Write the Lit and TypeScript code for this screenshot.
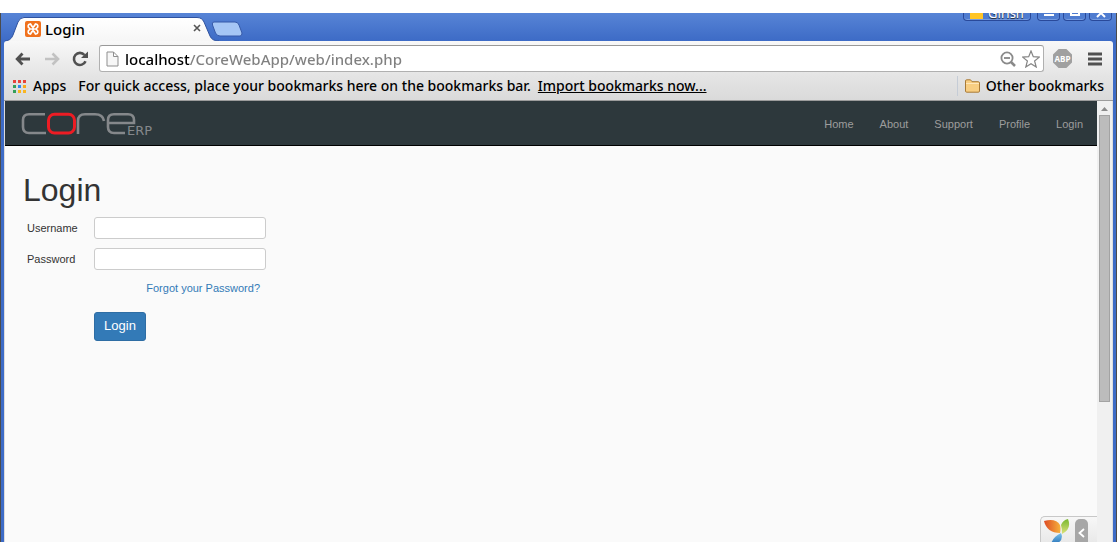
import { LitElement, html, css } from "lit";
import { customElement } from "lit/decorators.js";

@customElement("browser-tabs")
class BrowserTabs extends LitElement {
  static styles = css`
    :host { display: block; height: 28px; overflow: hidden; background: linear-gradient(#5784d6, #3d6bc6); font: 500 15px "Noto Sans", sans-serif; }
    .strip { display: flex; height: 28px; align-items: flex-start; padding: 0 4px; }
    .tab { display: grid; width: 214px; height: 24px; margin-top: 4px; }
    .tab > * { grid-area: 1 / 1; }
    .label { display: flex; align-items: center; padding: 0 16px 0 20px; gap: 4px; color: #000; line-height: 24px; }
    .name { flex: 1; }
    .close { border: 0; background: none; padding: 0; width: 10px; height: 10px; display: flex; }
    .fresh { border: 0; background: none; padding: 0; margin: 8px 0 0 -9px; height: 16px; width: 34px; }
    .gap { flex: 1; }
    .win { display: flex; gap: 3px; height: 8px; overflow: hidden; align-items: flex-end; }
    .win button { border: 1px solid #29499a; border-top: 0; border-radius: 0 0 4px 4px; height: 20px; padding: 0; background: #4f7cd0; width: 23px; box-shadow: inset 0 -1px #759be0; display: flex; align-items: flex-end; justify-content: center; }
    .win .user { width: 68px; margin-right: 3px; color: #fff; font: 13px/12px "Noto Sans", sans-serif; gap: 5px; text-shadow: 0 1px 1px #222; padding-bottom: 1px; }
    .pic { width: 13px; height: 8px; background: #ffc526; }
    .win svg { margin-bottom: 2px; }
  `;
  render() {
    return html`<div class="strip">
      <div class="tab">
        <svg width="214" height="24" viewBox="0 0 214 24">
          <defs><linearGradient id="t" x2="0" y2="1"><stop stop-color="#fff" /><stop offset="1" stop-color="#f6f6f6" /></linearGradient></defs>
          <path d="M-1 24Q6 24 8 18L13 5Q15 .5 19 .5H192Q197 .5 199 5L205 19Q207 24 214 24" fill="url(#t)" stroke="#2f529f" />
        </svg>
        <div class="label">
          <svg width="16" height="16" viewBox="0 0 16 16"><rect width="16" height="16" rx="2" fill="#f0711d" />
            <path d="M5.500 3H5A2.200 2.200 0 0 0 4.500 7.200M5.500 13H5A2.200 2.200 0 0 1 4.500 8.800M10.500 3h.5A2.200 2.200 0 0 1 11.500 7.200M10.500 13h.5A2.200 2.200 0 0 0 11.500 8.800M5.500 3 7 5.500H9L10.500 3M5.500 13 7 10.500H9L10.500 13M4.500 8H6.500M9.500 8h2M8 5.500v5" fill="none" stroke="#fff" stroke-width="1.700" stroke-linecap="round" /></svg>
          <span class="name">Login</span>
          <button class="close" aria-label="Close tab"><svg width="8" height="8" viewBox="0 0 8 8"><path d="M1 1l6 6M7 1 1 7" stroke="#555" stroke-width="1.600" /></svg></button>
        </div>
      </div>
      <button class="fresh" aria-label="New tab"><svg width="34" height="16" viewBox="0 0 34 16"><path d="M4 1H25Q28 1 29 4L32 12Q32 15 30 15H10Q7 15 5.500 12L2.500 4Q1.500 1 4 1Z" fill="#a5c6f5" stroke="#3559a8" /></svg></button>
      <span class="gap"></span>
      <div class="win">
        <button class="user"><span class="pic"></span>Girish</button>
        <button aria-label="Minimize"><svg width="10" height="4"><path d="M0 1h10" stroke="#fff" stroke-width="2" /></svg></button>
        <button aria-label="Maximize"><svg width="10" height="5"><path d="M1 0v2h8V0" fill="none" stroke="#fff" stroke-width="2" /></svg></button>
        <button aria-label="Close"><svg width="10" height="6"><path d="M1 5 5 1l4 4" fill="none" stroke="#fff" stroke-width="2" /></svg></button>
      </div>
    </div>`;
  }
}

@customElement("browser-toolbar")
class BrowserToolbar extends LitElement {
  static styles = css`
    :host { display: block; background: linear-gradient(#f8f8f8, #e4e4e4 60%, #dadada); border-bottom: 1px solid #9c9c9c; font: 500 14px "Noto Sans", sans-serif; color: #000; }
    .row { display: flex; align-items: center; }
    .main { height: 35px; padding: 0 11px 0 8px; }
    .nav { border: 0; background: none; padding: 0; width: 29px; height: 20px; display: flex; align-items: center; }
    .omni { flex: 1; display: flex; align-items: center; height: 27px; box-sizing: border-box; border: 1px solid #b0b0b0; border-top-color: #999; border-radius: 3px; background: #fff; padding: 0 3px 0 6px; gap: 6px; }
    .url { flex: 1; min-width: 0; border: 0; outline: 0; padding: 0; font: 500 15px/24px "Noto Sans", sans-serif; color: #808080; -webkit-text-fill-color: transparent; background: linear-gradient(90deg, #000 65px, #808080 65px); -webkit-background-clip: text; background-clip: text; }
    .act { border: 0; background: none; padding: 0; display: flex; }
    .abp { margin: 0 16px 0 9px; }
    .marks { height: 24px; padding: 0 9px 4px; line-height: 20px; box-sizing: border-box; }
    a { color: inherit; text-decoration: none; }
    .apps { display: flex; align-items: center; gap: 7px; margin-right: 12px; }
    .import { text-decoration: underline; margin-left: 7px; }
    .other { margin-left: auto; display: flex; align-items: center; gap: 6px; border-left: 1px solid #c5ccd6; padding-left: 7px; }
  `;
  render() {
    const tiles = ["#e8433a", "#e8433a", "#e8433a", "#35a05a", "#3189ee", "#f9ab1b", "#35a05a", "#f9b520", "#f9b520"];
    return html`<div class="row main">
        <button class="nav" aria-label="Back"><svg width="24" height="14" viewBox="0 0 24 14"><path d="M5 7H18M10.500 1.500 5.200 7l5.300 5.500" fill="none" stroke="#505050" stroke-width="2.800" /></svg></button>
        <button class="nav" aria-label="Forward"><svg width="24" height="14" viewBox="0 0 24 14"><path d="M4 7H17M11.500 1.500 17 7l-5.500 5.500" fill="none" stroke="#c2c2c2" stroke-width="2.600" /></svg></button>
        <button class="nav" aria-label="Reload"><svg width="22" height="16" viewBox="0 0 22 16"><path d="M15.500 10.200A6 6 0 1 1 14.500 4" fill="none" stroke="#505050" stroke-width="2.600" /><path d="M18 .5V7H11Z" fill="#505050" /></svg></button>
        <div class="omni">
          <svg width="13" height="16" viewBox="0 0 13 16"><path d="M1 1H7.500L12 5.500V15H1ZM7.500 1V5.500H12" fill="#f7f7f7" stroke="#8f8f8f" /></svg>
          <input class="url" aria-label="Address" value="localhost/CoreWebApp/web/index.php" />
          <button class="act" aria-label="Zoom"><svg width="16" height="16" viewBox="0 0 16 16"><circle cx="7" cy="7" r="5.600" fill="none" stroke="#8a8a8a" stroke-width="1.800" /><path d="M4 7h6" stroke="#777" stroke-width="1.600" /><path d="m11 11 4 4" stroke="#8a8a8a" stroke-width="2.500" /></svg></button>
          <button class="act" aria-label="Bookmark this page"><svg width="18" height="18" viewBox="0 0 18 18"><path d="M9 1l2.300 5.700 6 .4-4.700 3.900 1.600 6L9 13.700 3.800 17l1.600-6L.7 7.100l6-.4Z" fill="#fff" stroke="#858585" stroke-width="1.200" /></svg></button>
        </div>
        <button class="act abp" aria-label="Adblock Plus"><svg width="19" height="19" viewBox="0 0 19 19"><path d="M5.600 0h7.800L19 5.600v7.800L13.400 19H5.600L0 13.400V5.600Z" fill="#a0a0a0" /><text x="9.500" y="12.500" text-anchor="middle" font-family="Open Sans, sans-serif" font-size="8" font-weight="700" fill="#fff">ABP</text></svg></button>
        <button class="act" aria-label="Menu"><svg width="14" height="14" viewBox="0 0 14 14"><path d="M0 2h14M0 7h14M0 12h14" stroke="#505050" stroke-width="3" /></svg></button>
      </div>
      <div class="row marks">
        <a class="apps" href="#"><svg width="13" height="13" viewBox="0 0 13 13">${tiles.map((c, i) => html`<svg x=${(i % 3) * 5} y=${Math.floor(i / 3) * 5} width="3" height="3"><rect width="3" height="3" fill=${c} /></svg>`)}</svg>Apps</a>
        <span>For quick access, place your bookmarks here on the bookmarks bar.</span>
        <a class="import" href="#">Import bookmarks now...</a>
        <a class="other" href="#"><svg width="15" height="14" viewBox="0 0 15 14"><path d="M.5 12V2Q.5.8 1.700.8H5.500L7 2.700H13.300Q14.500 2.700 14.500 4V12Q14.500 13.200 13.300 13.200H1.700Q.5 13.200.5 12Z" fill="#f8ce82" stroke="#a87a37" /><path d="M1 4.500h13" stroke="#ffe7b9" /></svg>Other bookmarks</a>
      </div>`;
  }
}

@customElement("login-page")
class LoginPage extends LitElement {
  static styles = css`
    :host { display: block; background: #fafafa; color: #333; font: 11px/16px "Liberation Sans", Arial, sans-serif; overflow: hidden; }
    header { background: #2d383c; border-bottom: 1px solid #000; height: 44px; display: flex; align-items: center; justify-content: space-between; padding: 0 14px 0 16px; }
    .brand { display: flex; }
    nav { display: flex; gap: 26px; padding-top: 2px; }
    nav a { color: #9d9d9d; text-decoration: none; }
    main { padding: 26px 18px; }
    h1 { margin: 0 0 9px; font-size: 32px; line-height: 36px; font-weight: 400; }
    form { display: grid; grid-template-columns: 67px 172px; row-gap: 9px; padding-left: 4px; align-items: center; }
    input { box-sizing: border-box; width: 172px; height: 22px; border: 1px solid #ccc; border-radius: 3px; background: #fff; padding: 2px 6px; font: inherit; color: #555; }
    label { color: #333; }
    .forgot { grid-column: 2; justify-self: end; margin-right: 6px; color: #337ab7; text-decoration: none; padding: 1px 0; }
    .go { grid-column: 2; justify-self: start; margin-top: 6px; height: 29px; width: 52px; border: 1px solid #2e6da4; border-radius: 3px; background: #337ab7; color: #fff; padding: 0 0 2px; font: 13px/18px "Liberation Sans", Arial, sans-serif; }
  `;
  render() {
    return html`<header>
        <a class="brand" href="#" aria-label="Core ERP"><svg width="136" height="34" viewBox="0 -4 136 34">
          <g fill="none" stroke="#85888b" stroke-width="2.600">
            <path d="M24 4.300H8Q2 4.300 2 10V17Q2 23 8 23H25" />
            <path d="M57 24V11Q57 4.300 64 4.300H74Q82 4.300 83 11" />
            <path d="M88 13H113V10Q113 4.300 107 4.300H93Q87 4.300 87 10V17Q87 23 93 23H104" />
          </g>
          <rect x="27.500" y="4.300" width="26" height="18.700" rx="6" fill="none" stroke="#ed1c24" stroke-width="3" />
          <text x="106" y="24.500" font-family="DejaVu Sans, sans-serif" font-size="13" fill="#85888b">ERP</text>
        </svg></a>
        <nav><a href="#">Home</a><a href="#">About</a><a href="#">Support</a><a href="#">Profile</a><a href="#">Login</a></nav>
      </header>
      <main>
        <h1>Login</h1>
        <form>
          <label for="user">Username</label><input id="user" type="text" />
          <label for="pass">Password</label><input id="pass" type="password" />
          <a class="forgot" href="#">Forgot your Password?</a>
          <button class="go" type="button">Login</button>
        </form>
      </main>`;
  }
}

@customElement("app-root")
class AppRoot extends LitElement {
  static styles = css`
    :host { display: block; box-sizing: border-box; height: 100vh; padding: 13px 0; background: #fff; }
    .window { box-sizing: border-box; height: 100%; display: flex; flex-direction: column; overflow: hidden; border: solid #4b4b4b; border-width: 0 1px; background: #3d6bc6; }
    browser-toolbar { margin: 0 3px; border-radius: 3px 3px 0 0; }
    .view { flex: 1; min-height: 0; display: flex; margin: 0 3px; border: solid #dcdcdc; border-width: 0 1px; position: relative; }
    login-page { flex: 1; }
    .bar { width: 15px; box-sizing: border-box; background: #f0f0f0; display: flex; flex-direction: column; align-items: center; }
    .bar svg { flex: none; }
    .thumb { width: 11px; height: 65%; box-sizing: border-box; background: #bcbcbc; border: 1px solid #a3a3a3; }
    .debug { position: absolute; right: 15px; bottom: 0; height: 26px; width: 57px; box-sizing: border-box; border: 1px solid #c8c8c8; border-width: 1px 0 0 1px; border-radius: 5px 0 0; background: linear-gradient(#f7f7f7, #e9e9e9); overflow: hidden; display: flex; align-items: flex-start; padding: 2px 9px 0 2px; justify-content: space-between; }
    .debug button { border: 0; padding: 0; width: 13px; height: 28px; border-radius: 5px; background: #a7a7a7; display: flex; align-items: center; justify-content: center; }
  `;
  render() {
    return html`<div class="window">
      <browser-tabs></browser-tabs>
      <browser-toolbar></browser-toolbar>
      <div class="view">
        <login-page></login-page>
        <div class="bar"><svg width="15" height="14"><path d="M4 10h7L7.500 6Z" fill="#8b8b8b" /></svg><div class="thumb"></div></div>
        <div class="debug">
          <svg width="28" height="30" viewBox="0 0 28 30">
            <defs>
              <linearGradient id="r"><stop stop-color="#dd4a24" /><stop offset="1" stop-color="#f6b13c" /></linearGradient>
              <linearGradient id="g" x2="0" y2="1"><stop stop-color="#79b72f" /><stop offset="1" stop-color="#dbe27b" /></linearGradient>
              <linearGradient id="b" x2="0" y2="1"><stop stop-color="#79c3ec" /><stop offset="1" stop-color="#1d66b0" /></linearGradient>
            </defs>
            <path d="M1 2Q13-1 17 6Q18 9 17 14Q4 14 1 2Z" fill="url(#r)" />
            <path d="M18 6Q20 1 25 0Q29 10 19 15Q19 9 18 6Z" fill="url(#g)" />
            <path d="M18 14Q22 23 8 27Q8 19 18 14Z" fill="url(#b)" />
          </svg>
          <button aria-label="Expand debug toolbar"><svg width="7" height="10" viewBox="0 0 7 10"><path d="M6 1 1.500 5 6 9" fill="none" stroke="#fff" stroke-width="1.800" /></svg></button>
        </div>
      </div>
    </div>`;
  }
}
